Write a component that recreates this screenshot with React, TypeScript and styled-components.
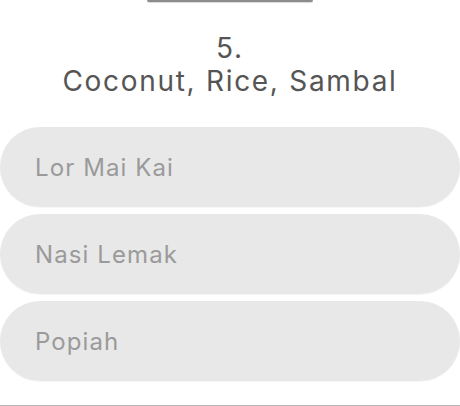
import React from "react";
import styled, { createGlobalStyle } from "styled-components";

const Global = createGlobalStyle`
  html, body { margin: 0; padding: 0; background: #fff; }
  body { font-family: Inter, "Open Sans", sans-serif; }
`;

const Page = styled.div`
  width: 460px;
  height: 406px;
  display: flex;
  flex-direction: column;
  align-items: center;
  box-sizing: border-box;
  border-bottom: 1px solid #b9b9b9;
  overflow: hidden;
`;

const TopTab = styled.div`
  width: 166px;
  height: 2px;
  margin-left: -1px;
  background: #8c8c8c;
  border-radius: 0 0 6px 6px;
  box-shadow: 0 1px 1px rgba(0, 0, 0, 0.15);
`;

const Question = styled.h2`
  margin: 30px 0 0;
  font-family: Inter, "Open Sans", sans-serif;
  font-weight: 400;
  font-size: 28px;
  line-height: 33px;
  letter-spacing: 1.7px;
  color: #555;
  text-align: center;
`;

const Options = styled.div`
  align-self: stretch;
  display: flex;
  flex-direction: column;
  gap: 7px;
  margin-top: 29px;
`;

const Option = styled.button`
  height: 80px;
  border: none;
  border-radius: 40px;
  background: #e8e8e8;
  box-shadow: 0 1px 1px rgba(0, 0, 0, 0.04);
  padding: 0 0 0 35px;
  text-align: left;
  font-family: Inter, "Open Sans", sans-serif;
  font-size: 24px;
  font-weight: 400;
  letter-spacing: 1.1px;
  color: #9a9a9a;
  cursor: pointer;
`;

export default function App() {
  const items = ["Lor Mai Kai", "Nasi Lemak", "Popiah"];
  return (
    <>
      <Global />
      <Page>
        <TopTab />
        <Question>
          5.
          <br />
          Coconut, Rice, Sambal
        </Question>
        <Options>
          {items.map((t) => (
            <Option key={t}>{t}</Option>
          ))}
        </Options>
      </Page>
    </>
  );
}
